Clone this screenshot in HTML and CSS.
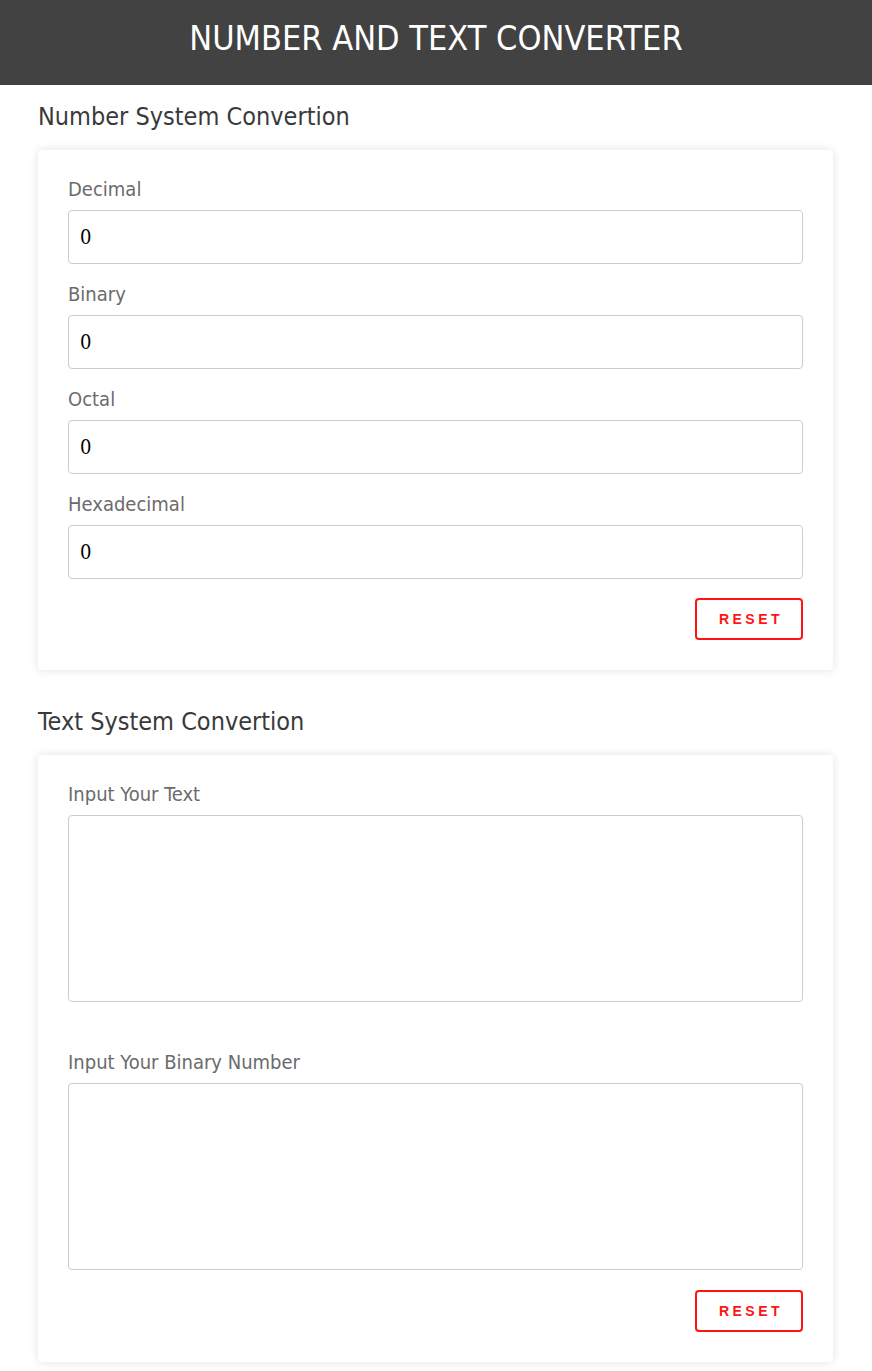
FILE: index.html
```html
<!DOCTYPE html>
<html lang="en">
<head>
<meta charset="utf-8">
<title>Number and Text Converter</title>
<link rel="stylesheet" href="styles.css">
</head>
<body>
<header class="topbar">
  <h1 class="title">NUMBER AND TEXT CONVERTER</h1>
</header>
<main class="container">
  <h2 class="section-title">Number System Convertion</h2>
  <section class="card">
    <label class="field-label" for="dec">Decimal</label>
    <input class="field-input" id="dec" type="text" value="0">
    <label class="field-label" for="bin">Binary</label>
    <input class="field-input" id="bin" type="text" value="0">
    <label class="field-label" for="oct">Octal</label>
    <input class="field-input" id="oct" type="text" value="0">
    <label class="field-label" for="hex">Hexadecimal</label>
    <input class="field-input" id="hex" type="text" value="0">
    <div class="actions"><button class="reset-btn" type="button">RESET</button></div>
  </section>

  <h2 class="section-title section-title-second">Text System Convertion</h2>
  <section class="card">
    <label class="field-label" for="txt">Input Your Text</label>
    <textarea class="field-area" id="txt"></textarea>
    <label class="field-label field-label-spaced" for="bintxt">Input Your Binary Number</label>
    <textarea class="field-area" id="bintxt"></textarea>
    <div class="actions actions-area"><button class="reset-btn" type="button">RESET</button></div>
  </section>
</main>
</body>
</html>
```
FILE: styles.css
```css
* { box-sizing: border-box; }
body {
  margin: 0;
  background: #fff;
  font-family: "DejaVu Sans Condensed", "DejaVu Sans", sans-serif;
}
.topbar {
  background: #424242;
  height: 85px;
  padding-bottom: 9px;
  display: flex;
  align-items: center;
  justify-content: center;
}
.title {
  margin: 0;
  color: #fff;
  font-weight: 400;
  font-size: 34px;
  line-height: 40px;
}
.container {
  padding: 0 39px 9px 38px;
}
.section-title {
  margin: 15px 0 16px;
  font-weight: 400;
  font-size: 25px;
  line-height: 34px;
  color: #3a3a3a;
}
.section-title-second { margin-top: 35px; }
.card {
  background: #fff;
  border-radius: 4px;
  box-shadow: 0 0 10px rgba(0,0,0,0.12);
  padding: 24px 30px 30px;
}
.field-label {
  display: block;
  font-size: 20px;
  line-height: 30px;
  color: #6b6b6b;
  margin-bottom: 6px;
}
.field-label-spaced { margin-top: 45px; }
.field-input {
  display: block;
  width: 100%;
  height: 54px;
  border: 1px solid #cccccc;
  border-radius: 4px;
  padding: 0 11px;
  font-family: "DejaVu Serif Condensed", "DejaVu Serif", serif;
  font-size: 20px;
  color: #000;
  margin-bottom: 15px;
  outline: none;
}
.field-area {
  display: block;
  width: 100%;
  height: 187px;
  border: 1px solid #cccccc;
  border-radius: 4px;
  resize: none;
  font-family: inherit;
  font-size: 18px;
  outline: none;
}
.actions {
  display: flex;
  justify-content: flex-end;
  margin-top: 19px;
}
.actions-area { margin-top: 20px; }
.reset-btn {
  width: 108px;
  height: 42px;
  background: #fff;
  border: 2px solid #ff1414;
  border-radius: 4px;
  color: #ff1414;
  font-family: "Liberation Sans", Arial, sans-serif;
  font-weight: 700;
  font-size: 14px;
  letter-spacing: 3.5px;
  padding: 0 0 0 4px;
  cursor: pointer;
}
```
